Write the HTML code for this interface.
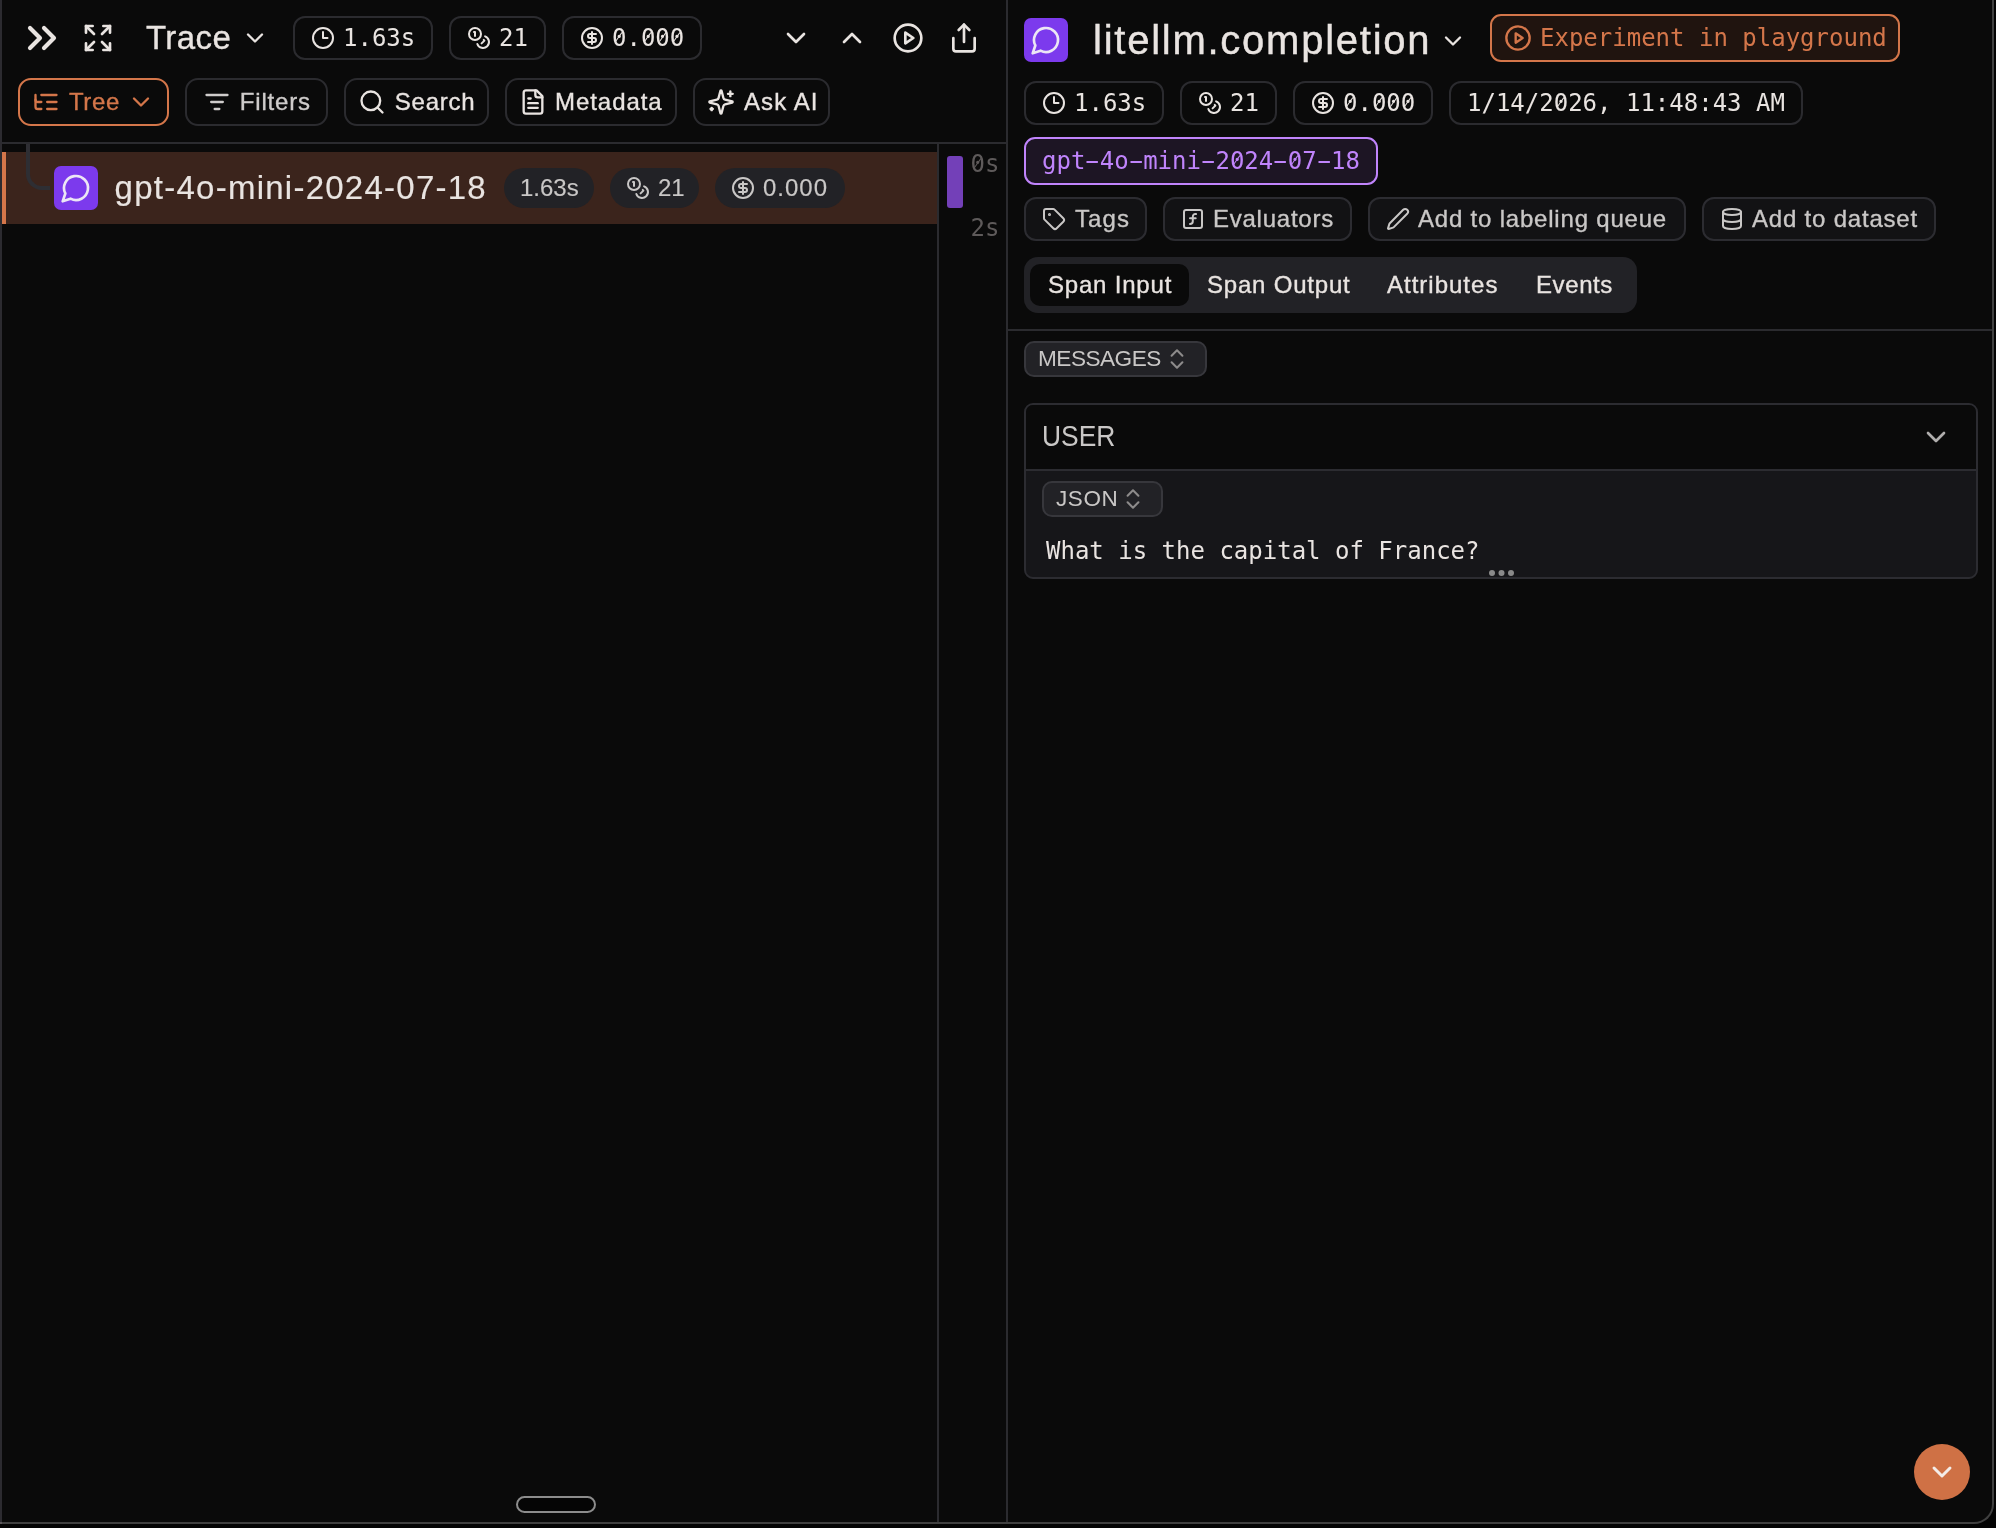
<!DOCTYPE html>
<html lang="en">
<head>
<meta charset="utf-8">
<title>Trace</title>
<style>
*{box-sizing:border-box;margin:0;padding:0}
html,body{width:1996px;height:1528px;overflow:hidden;background:#040404}
body{position:relative;font-family:"Liberation Sans",sans-serif;color:#e9e4e1;-webkit-font-smoothing:antialiased}
.abs{position:absolute}
.mono{font-family:"DejaVu Sans Mono","Liberation Mono",monospace}
.frame{position:absolute;left:0;top:-4px;width:1994px;height:1528px;background:#0a0a0a;border-right:2px solid #404040;border-bottom:2px solid #404040;border-bottom-right-radius:20px}
svg{display:block;fill:none;stroke:currentColor;stroke-width:2;stroke-linecap:round;stroke-linejoin:round;position:absolute}
.t{position:absolute;white-space:nowrap;line-height:1;-webkit-text-stroke:.35px currentColor}
.t.mono,.t.ns{-webkit-text-stroke:0}
.t.ls{-webkit-text-stroke:.15px currentColor}
.hy{display:inline-block;transform:scaleX(1.86)}
.z{display:inline-block;position:relative}
.z::after{content:"";position:absolute;left:50%;top:47.5%;width:.058em;height:.45em;background:currentColor;border-radius:.03em;transform:translate(-50%,-50%) rotate(35deg)}
.vline{position:absolute;width:2px;background:#2b2b2f}
.hline{position:absolute;height:2px;background:#2b2b2f}
.chip{position:absolute;height:44px;border:2px solid #2b2b2f;border-radius:12px}
.btn{position:absolute;height:48px;border:2px solid #2b2b2f;border-radius:13px}
.btn2{position:absolute;height:44px;border:2px solid #2c2c31;border-radius:12px;background:#121214}
.pill{position:absolute;height:40px;border-radius:20px;background:#222226}
.sel{position:absolute;height:36px;border:2px solid #37373c;border-radius:10px;background:#222226}
</style>
</head>
<body>
<div id="root" style="position:absolute;left:0;top:0;width:1996px;height:1528px;will-change:transform">
<div class="frame"></div>

<!-- ===== structural lines ===== -->
<div class="vline" style="left:0;top:0;height:1522px;background:#2c2b30"></div>
<div class="abs" style="left:0;top:1522px;width:2px;height:2px;background:#5a5659"></div>
<div class="vline" style="left:1006px;top:0;height:1522px"></div>
<div class="vline" style="left:937px;top:144px;height:1378px"></div>
<div class="hline" style="left:2px;top:142px;width:1004px"></div>
<div class="hline" style="left:1008px;top:329px;width:984px"></div>

<!-- LEFT-HEADER -->
<svg viewBox="0 0 24 24" width="48" height="48" style="left:18px;top:14px;stroke-width:2.1"><path d="m6 17 5-5-5-5"/><path d="m13 17 5-5-5-5"/></svg>
<svg viewBox="0 0 24 24" width="32" height="32" style="left:82px;top:22px"><path d="m15 15 6 6"/><path d="m15 9 6-6"/><path d="M21 16v5h-5"/><path d="M21 8V3h-5"/><path d="M3 16v5h5"/><path d="m3 21 6-6"/><path d="M3 8V3h5"/><path d="M9 9 3 3"/></svg>
<div class="t" id="trace" style="left:146px;top:21px;font-size:33px;letter-spacing:.4px">Trace</div>
<svg viewBox="0 0 24 24" width="28" height="28" style="left:241px;top:24px"><path d="m6 9 6 6 6-6"/></svg>

<div class="chip" style="left:293px;top:16px;width:140px"></div>
<svg viewBox="0 0 24 24" width="24" height="24" style="left:311px;top:26px"><circle cx="12" cy="12" r="10"/><polyline points="12 6 12 12 16.5 12"/></svg>
<div class="t mono" style="left:343px;top:24px;font-size:24px;line-height:28px">1.63s</div>

<div class="chip" style="left:449px;top:16px;width:97px"></div>
<svg viewBox="0 0 24 24" width="24" height="24" style="left:467px;top:26px"><circle cx="8" cy="8" r="6"/><path d="M18.09 10.37A6 6 0 1 1 10.34 18"/><path d="M7 6h1v4"/><path d="m16.71 13.88.7.71-2.82 2.82"/></svg>
<div class="t mono" style="left:499px;top:24px;font-size:24px;line-height:28px">21</div>

<div class="chip" style="left:562px;top:16px;width:140px"></div>
<svg viewBox="0 0 24 24" width="24" height="24" style="left:580px;top:26px"><circle cx="12" cy="12" r="10"/><path d="M16 8h-6a2 2 0 1 0 0 4h4a2 2 0 1 1 0 4H8"/><path d="M12 18V6"/></svg>
<div class="t mono" style="left:612px;top:24px;font-size:24px;line-height:28px"><span class="z">0</span>.<span class="z">0</span><span class="z">0</span><span class="z">0</span></div>

<svg viewBox="0 0 24 24" width="32" height="32" style="left:780px;top:22px"><path d="m6 9 6 6 6-6"/></svg>
<svg viewBox="0 0 24 24" width="32" height="32" style="left:836px;top:22px"><path d="m18 15-6-6-6 6"/></svg>
<svg viewBox="0 0 24 24" width="32" height="32" style="left:892px;top:22px"><circle cx="12" cy="12" r="10"/><polygon points="10 8 16 12 10 16 10 8"/></svg>
<svg viewBox="0 0 24 24" width="32" height="32" style="left:948px;top:22px"><path d="M12 2v13"/><path d="m16 6-4-4-4 4"/><path d="M4 12v8a2 2 0 0 0 2 2h12a2 2 0 0 0 2-2v-8"/></svg>

<!-- LEFT-TOOLBAR -->
<div class="btn" style="left:18px;top:78px;width:151px;border-color:#d4764a;color:#d4764a"></div>
<svg viewBox="0 0 24 24" width="28" height="28" style="left:32px;top:88px;color:#d4764a"><path d="M21 12h-8"/><path d="M21 6H8"/><path d="M21 18h-8"/><path d="M3 6v4c0 1.1.9 2 2 2h3"/><path d="M3 10v6c0 1.1.9 2 2 2h3"/></svg>
<div class="t" style="left:69px;top:90px;font-size:24px;color:#d4764a;letter-spacing:.6px">Tree</div>
<svg viewBox="0 0 24 24" width="28" height="28" style="left:127px;top:88px;color:#d4764a"><path d="m6 9 6 6 6-6"/></svg>

<div class="btn" style="left:185px;top:78px;width:143px"></div>
<svg viewBox="0 0 24 24" width="28" height="28" style="left:203px;top:88px;color:#cfcccb"><path d="M3 6h18"/><path d="M7 12h10"/><path d="M10 18h4"/></svg>
<div class="t" style="left:239.7px;top:90px;font-size:24px;color:#cfcccb;letter-spacing:.85px">Filters</div>

<div class="btn" style="left:344px;top:78px;width:145px"></div>
<svg viewBox="0 0 24 24" width="28" height="28" style="left:358px;top:88px"><circle cx="11" cy="11" r="8"/><path d="m21 21-4.3-4.3"/></svg>
<div class="t" style="left:394.8px;top:90px;font-size:24px;letter-spacing:.75px">Search</div>

<div class="btn" style="left:505px;top:78px;width:172px"></div>
<svg viewBox="0 0 24 24" width="28" height="28" style="left:519px;top:88px"><path d="M15 2H6a2 2 0 0 0-2 2v16a2 2 0 0 0 2 2h12a2 2 0 0 0 2-2V7Z"/><path d="M14 2v4a2 2 0 0 0 2 2h4"/><path d="M10 9H8"/><path d="M16 13H8"/><path d="M16 17H8"/></svg>
<div class="t" style="left:555px;top:90px;font-size:24px;letter-spacing:.95px">Metadata</div>

<div class="btn" style="left:693px;top:78px;width:137px"></div>
<svg viewBox="0 0 24 24" width="28" height="28" style="left:707px;top:88px"><path d="M9.937 15.5A2 2 0 0 0 8.5 14.063l-6.135-1.582a.5.5 0 0 1 0-.962L8.5 9.936A2 2 0 0 0 9.937 8.5l1.582-6.135a.5.5 0 0 1 .963 0L14.063 8.5A2 2 0 0 0 15.5 9.937l6.135 1.581a.5.5 0 0 1 0 .964L15.5 14.063a2 2 0 0 0-1.437 1.437l-1.582 6.135a.5.5 0 0 1-.963 0z"/><path d="M20 3v4"/><path d="M22 5h-4"/><path d="M4 17v2"/><path d="M5 18H3"/></svg>
<div class="t" style="left:744px;top:90px;font-size:24px;letter-spacing:1.1px">Ask AI</div>

<!-- TREE-ROW -->
<div class="abs" style="left:26px;top:144px;width:24px;height:46px;border-left:4px solid #2e2e33;border-bottom:4px solid #2e2e33;border-bottom-left-radius:16px"></div>
<div class="abs" style="left:2px;top:152px;width:935px;height:72px;background:#3b241c"></div>
<div class="abs" style="left:2px;top:152px;width:4px;height:72px;background:#d4764a"></div>
<div class="abs" style="left:26px;top:152px;width:24px;height:38px;border-left:4px solid #2e2e33;border-bottom:4px solid #2e2e33;border-bottom-left-radius:16px"></div>
<div class="abs" style="left:54px;top:166px;width:44px;height:44px;border-radius:7px;background:#7c3aed"></div>
<svg viewBox="0 0 24 24" width="32" height="32" style="left:60px;top:172px;color:#ece6f5"><path d="M7.9 20A9 9 0 1 0 4 16.1L2 22Z"/></svg>
<div class="t ls" id="rowname" style="left:114.6px;top:169.6px;font-size:33px;line-height:36px;letter-spacing:1.25px">gpt-4o-mini-2024-07-18</div>

<div class="pill" style="left:504px;top:168px;width:90px"></div>
<div class="t ls" style="left:520px;top:176px;font-size:24px;color:#c9c7c6">1.63s</div>
<div class="pill" style="left:610px;top:168px;width:89px"></div>
<svg viewBox="0 0 24 24" width="24" height="24" style="left:626px;top:176px;color:#c9c7c6"><circle cx="8" cy="8" r="6"/><path d="M18.09 10.37A6 6 0 1 1 10.34 18"/><path d="M7 6h1v4"/><path d="m16.71 13.88.7.71-2.82 2.82"/></svg>
<div class="t ls" style="left:658px;top:176px;font-size:24px;color:#c9c7c6">21</div>
<div class="pill" style="left:715px;top:168px;width:130px"></div>
<svg viewBox="0 0 24 24" width="24" height="24" style="left:731px;top:176px;color:#c9c7c6"><circle cx="12" cy="12" r="10"/><path d="M16 8h-6a2 2 0 1 0 0 4h4a2 2 0 1 1 0 4H8"/><path d="M12 18V6"/></svg>
<div class="t ls" style="left:763px;top:176px;font-size:24px;color:#c9c7c6;letter-spacing:1px">0.000</div>

<!-- TIMELINE -->
<div class="abs" style="left:947px;top:156px;width:16px;height:52px;border-radius:3px;background:#7340b8"></div>
<div class="t mono" style="left:970.5px;top:150px;font-size:24px;line-height:28px;color:#5e5a5a"><span class="z">0</span>s</div>
<div class="t mono" style="left:970.5px;top:214px;font-size:24px;line-height:28px;color:#5e5a5a">2s</div>
<div class="abs" style="left:516px;top:1495.5px;width:80px;height:17px;border:2px solid #8c8c8c;border-radius:9px;background:#050505"></div>

<!-- RIGHT-HEADER -->
<div class="abs" style="left:1024px;top:18px;width:44px;height:44px;border-radius:7px;background:#7c3aed"></div>
<svg viewBox="0 0 24 24" width="32" height="32" style="left:1030px;top:24px;color:#ece6f5"><path d="M7.9 20A9 9 0 1 0 4 16.1L2 22Z"/></svg>
<div class="t" id="title" style="left:1093px;top:17px;font-size:40px;line-height:46px;letter-spacing:1.75px;-webkit-text-stroke:.4px currentColor">litellm.completion</div>
<svg viewBox="0 0 24 24" width="28" height="28" style="left:1438.5px;top:26.5px"><path d="m6 9 6 6 6-6"/></svg>
<div class="abs" style="left:1490px;top:14px;width:410px;height:48px;border:2px solid #d4764a;border-radius:11px;background:#20140f"></div>
<svg viewBox="0 0 24 24" width="28" height="28" style="left:1504px;top:24px;color:#d4764a"><circle cx="12" cy="12" r="10"/><polygon points="10 8 16 12 10 16 10 8"/></svg>
<div class="t mono" style="left:1540px;top:24px;font-size:24px;line-height:28px;color:#d4764a">Experiment in playground</div>
<!-- RIGHT-CHIPS -->
<div class="chip" style="left:1024px;top:81px;width:140px"></div>
<svg viewBox="0 0 24 24" width="24" height="24" style="left:1042px;top:91px"><circle cx="12" cy="12" r="10"/><polyline points="12 6 12 12 16.5 12"/></svg>
<div class="t mono" style="left:1074px;top:89px;font-size:24px;line-height:28px">1.63s</div>
<div class="chip" style="left:1180px;top:81px;width:97px"></div>
<svg viewBox="0 0 24 24" width="24" height="24" style="left:1198px;top:91px"><circle cx="8" cy="8" r="6"/><path d="M18.09 10.37A6 6 0 1 1 10.34 18"/><path d="M7 6h1v4"/><path d="m16.71 13.88.7.71-2.82 2.82"/></svg>
<div class="t mono" style="left:1230px;top:89px;font-size:24px;line-height:28px">21</div>
<div class="chip" style="left:1293px;top:81px;width:140px"></div>
<svg viewBox="0 0 24 24" width="24" height="24" style="left:1311px;top:91px"><circle cx="12" cy="12" r="10"/><path d="M16 8h-6a2 2 0 1 0 0 4h4a2 2 0 1 1 0 4H8"/><path d="M12 18V6"/></svg>
<div class="t mono" style="left:1343px;top:89px;font-size:24px;line-height:28px"><span class="z">0</span>.<span class="z">0</span><span class="z">0</span><span class="z">0</span></div>
<div class="chip" style="left:1449px;top:81px;width:354px"></div>
<div class="t mono" style="left:1467px;top:89px;font-size:24px;line-height:28px">1/14/2<span class="z">0</span>26, 11:48:43 AM</div>
<div class="abs" style="left:1024px;top:137px;width:354px;height:48px;border:2px solid #c084fc;border-radius:11px;background:#1d1524"></div>
<div class="t mono" style="left:1042px;top:147px;font-size:24px;line-height:28px;color:#c084fc">gpt<span class="hy">-</span>4o<span class="hy">-</span>mini<span class="hy">-</span>2<span class="z">0</span>24<span class="hy">-</span><span class="z">0</span>7<span class="hy">-</span>18</div>

<!-- RIGHT-ACTIONS -->
<div class="btn2" style="left:1024px;top:197px;width:123px"></div>
<svg viewBox="0 0 24 24" width="24" height="24" style="left:1042px;top:207px;color:#c9c7c6"><path d="M12.586 2.586A2 2 0 0 0 11.172 2H4a2 2 0 0 0-2 2v7.172a2 2 0 0 0 .586 1.414l8.704 8.704a2.426 2.426 0 0 0 3.42 0l6.58-6.58a2.426 2.426 0 0 0 0-3.42z"/><circle cx="7.5" cy="7.5" r=".5" fill="currentColor"/></svg>
<div class="t" style="left:1075px;top:207px;font-size:24px;color:#c9c7c6;letter-spacing:1.1px">Tags</div>
<div class="btn2" style="left:1163px;top:197px;width:189px"></div>
<svg viewBox="0 0 24 24" width="24" height="24" style="left:1181px;top:207px;color:#c9c7c6"><rect width="18" height="18" x="3" y="3" rx="2" ry="2"/><path d="M9 17c2 0 2.8-1 2.8-2.8V10c0-2 1-3.3 3.2-3"/><path d="M9 11.2h5.7"/></svg>
<div class="t" style="left:1213px;top:207px;font-size:24px;color:#c9c7c6;letter-spacing:.75px">Evaluators</div>
<div class="btn2" style="left:1368px;top:197px;width:318px"></div>
<svg viewBox="0 0 24 24" width="24" height="24" style="left:1386px;top:207px;color:#c9c7c6"><path d="M21.174 6.812a1 1 0 0 0-3.986-3.987L3.842 16.174a2 2 0 0 0-.5.83l-1.321 4.352a.5.5 0 0 0 .623.622l4.353-1.32a2 2 0 0 0 .83-.497z"/></svg>
<div class="t" style="left:1418px;top:207px;font-size:24px;color:#c9c7c6;letter-spacing:.8px">Add to labeling queue</div>
<div class="btn2" style="left:1702px;top:197px;width:234px"></div>
<svg viewBox="0 0 24 24" width="24" height="24" style="left:1720px;top:207px;color:#c9c7c6"><ellipse cx="12" cy="5" rx="9" ry="3"/><path d="M3 5V19A9 3 0 0 0 21 19V5"/><path d="M3 12A9 3 0 0 0 21 12"/></svg>
<div class="t" style="left:1752px;top:207px;font-size:24px;color:#c9c7c6;letter-spacing:.8px">Add to dataset</div>
<!-- TABS -->
<div class="abs" style="left:1024px;top:257px;width:613px;height:56px;border-radius:14px;background:#222226"></div>
<div class="abs" style="left:1030px;top:264px;width:159px;height:42px;border-radius:10px;background:#0a0a0a"></div>
<div class="t" style="left:1048px;top:273px;font-size:24px;letter-spacing:.8px">Span Input</div>
<div class="t" style="left:1207px;top:273px;font-size:24px;letter-spacing:.8px">Span Output</div>
<div class="t" style="left:1387px;top:273px;font-size:24px;letter-spacing:1px">Attributes</div>
<div class="t" style="left:1536px;top:273px;font-size:24px;letter-spacing:.6px">Events</div>

<!-- MESSAGES -->
<div class="sel" style="left:1024px;top:341px;width:183px"></div>
<div class="t ns" style="left:1038px;top:347.5px;font-size:22.6px;color:#c9c7c6;letter-spacing:-.5px">MESSAGES</div>
<svg viewBox="0 0 24 24" width="26" height="26" style="left:1164px;top:346px;color:#8d8b8b;stroke-width:1.9"><path d="m7 15 5 5 5-5"/><path d="m7 9 5-5 5 5"/></svg>

<div class="abs" style="left:1024px;top:403px;width:954px;height:176px;border:2px solid #2c2c31;border-radius:9px;background:#161619;overflow:hidden">
  <div class="abs" style="left:0;top:0;width:950px;height:66px;background:#0a0a0a;border-bottom:2px solid #2c2c31"></div>
</div>
<div class="t ns" style="left:1042px;top:422px;font-size:29px;color:#c9c7c6;transform:scaleX(.91);transform-origin:0 0">USER</div>
<svg viewBox="0 0 24 24" width="32" height="32" style="left:1920px;top:421px;color:#b0aead"><path d="m6 9 6 6 6-6"/></svg>
<div class="sel" style="left:1042px;top:481px;width:121px"></div>
<div class="t ns" style="left:1056px;top:487.5px;font-size:22.5px;color:#c9c7c6;letter-spacing:.6px">JSON</div>
<svg viewBox="0 0 24 24" width="26" height="26" style="left:1120px;top:486px;color:#8d8b8b;stroke-width:1.9"><path d="m7 15 5 5 5-5"/><path d="m7 9 5-5 5 5"/></svg>
<div class="t mono" style="left:1046px;top:537px;font-size:24px;line-height:28px">What is the capital of France?</div>
<div class="abs" style="left:1489px;top:570px;width:6px;height:6px;border-radius:3px;background:#8a8a8a;box-shadow:9.5px 0 0 #8a8a8a,19px 0 0 #8a8a8a"></div>
<!-- FLOAT -->
<div class="abs" style="left:1914px;top:1444px;width:56px;height:56px;border-radius:28px;background:#cf7145"></div>
<svg viewBox="0 0 24 24" width="32" height="32" style="left:1926px;top:1456px;color:#f3ece8;stroke-width:2.2"><path d="m6 9 6 6 6-6"/></svg>

</div>
</body>
</html>
